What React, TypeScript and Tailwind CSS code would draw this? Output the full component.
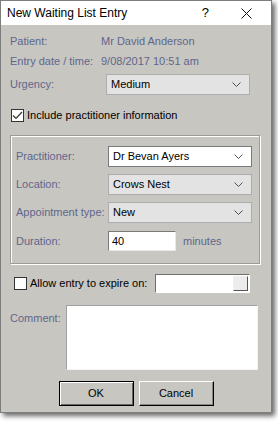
import React from 'react';

const font = { fontFamily: '"Liberation Sans", Arial, sans-serif' };

function Chevron() {
  return (
    <svg width="9" height="5" viewBox="0 0 9 5" className="shrink-0">
      <path d="M0.5 0.5 L4.5 4.5 L8.5 0.5" fill="none" stroke="#505050" strokeWidth="1" />
    </svg>
  );
}

function Select({ value, white }: { value: string; white?: boolean }) {
  return (
    <div
      className={`flex h-[21px] w-[144px] items-center justify-between border pl-[4px] pr-[8px] text-[11px] text-black ${
        white ? 'border-[#7a7a7a] bg-white' : 'border-[#adadad] bg-[#e3e3e3]'
      }`}
    >
      <span>{value}</span>
      <Chevron />
    </div>
  );
}

function Check({ checked }: { checked?: boolean }) {
  return (
    <span className="flex h-[13px] w-[13px] shrink-0 items-center justify-center border border-[#333] bg-white">
      {checked && (
        <svg width="11" height="9" viewBox="0 0 11 9">
          <path d="M1 4.5 L4 7.5 L10 1" fill="none" stroke="#333" strokeWidth="1.2" />
        </svg>
      )}
    </span>
  );
}

export default function App() {
  const label = 'text-[11px] text-[#5e668e]';

  return (
    <div className="h-[422px] w-[278px] bg-white" style={font}>
      <div className="flex h-[413px] w-[272px] flex-col border border-[#7d7d7d] bg-[#c8c6c0] shadow-[3px_3px_5px_rgba(0,0,0,0.6)]">
        {/* title bar */}
        <div className="flex h-[24px] shrink-0 items-center bg-white pl-[6px] text-[12px] text-black">
          <span className="flex-1">New Waiting List Entry</span>
          <span className="mr-[32px] text-[13px]">?</span>
          <svg width="11" height="11" viewBox="0 0 11 11" className="mr-[19px]">
            <path d="M0.5 0.5 L10.5 10.5 M10.5 0.5 L0.5 10.5" stroke="#111" strokeWidth="1" />
          </svg>
        </div>

        <div className="flex flex-col pl-[9px] pt-[8px]">
          <div className={`flex h-[16px] items-center ${label}`}>
            <span className="w-[91px]">Patient:</span>
            <span>Mr David Anderson</span>
          </div>
          <div className={`mt-[4px] flex h-[16px] items-center ${label}`}>
            <span className="w-[91px]">Entry date / time:</span>
            <span>9/08/2017 10:51 am</span>
          </div>
          <div className="mt-[5px] flex items-center">
            <span className={`w-[96px] ${label}`}>Urgency:</span>
            <Select value="Medium" />
          </div>

          <div className="mt-[12px] flex h-[16px] items-center gap-[3px] pl-[1px] text-[11px] text-black">
            <Check checked />
            <span>Include practitioner information</span>
          </div>

          {/* practitioner group */}
          <div className="mt-[12px] flex w-[250px] flex-col border border-[#9e9c97] pb-[12px] pl-[5px] pt-[10px] shadow-[inset_1px_1px_0_#fff,1px_1px_0_#fff]">
            <div className="flex items-center">
              <span className={`w-[92px] ${label}`}>Practitioner:</span>
              <Select value="Dr Bevan Ayers" white />
            </div>
            <div className="mt-[7px] flex items-center">
              <span className={`w-[92px] ${label}`}>Location:</span>
              <Select value="Crows Nest" />
            </div>
            <div className="mt-[7px] flex items-center">
              <span className={`w-[92px] ${label}`}>Appointment type:</span>
              <Select value="New" />
            </div>
            <div className="mt-[8px] flex items-center">
              <span className={`w-[92px] ${label}`}>Duration:</span>
              <div className="flex h-[20px] w-[68px] items-center border border-[#7a7a7a] border-b-[#e8e8e8] border-r-[#e8e8e8] bg-white pl-[3px] text-[11px] text-black">
                40
              </div>
              <span className={`ml-[7px] ${label}`}>minutes</span>
            </div>
          </div>

          <div className="mt-[10px] flex items-center pl-[4px]">
            <Check />
            <span className="ml-[3px] w-[125px] text-[11px] text-black">Allow entry to expire on:</span>
            <div className="flex h-[19px] w-[95px] items-center justify-end border border-[#6e6e6e] border-b-white border-r-white bg-white pr-[1px]">
              <div className="h-[15px] w-[15px] border border-[#f0f0f0] border-b-[#555] border-r-[#555] bg-[#ececec]" />
            </div>
          </div>

          <div className="mt-[12px] flex items-start">
            <span className={`mt-[5px] w-[56px] ${label}`}>Comment:</span>
            <div className="h-[65px] w-[192px] border border-[#a0a0a0] border-b-[#f4f4f4] border-r-[#f4f4f4] bg-white" />
          </div>

          <div className="mt-[11px] flex justify-center gap-[5px] pr-[9px]">
            <button className="h-[25px] w-[75px] border border-black bg-[#c8c6c0] text-[11px] text-black shadow-[inset_1px_1px_0_#fff,inset_-1px_-1px_0_#666]">
              OK
            </button>
            <button className="h-[25px] w-[75px] border border-white border-b-black border-r-black bg-[#c8c6c0] text-[11px] text-black shadow-[inset_-1px_-1px_0_#888]">
              Cancel
            </button>
          </div>
        </div>
      </div>
    </div>
  );
}
